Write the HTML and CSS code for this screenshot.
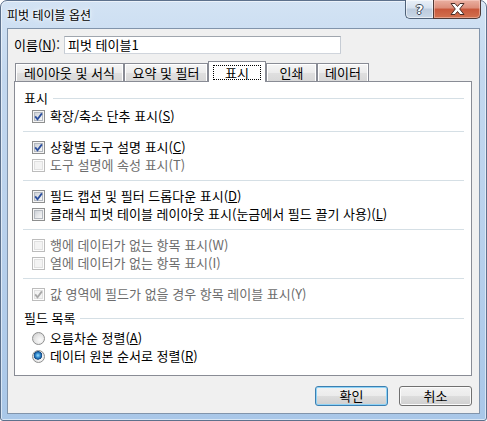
FILE: index.html
```html
<!DOCTYPE html>
<html lang="ko">
<head>
<meta charset="utf-8">
<title>피벗 테이블 옵션</title>
<link rel="stylesheet" href="styles.css">
</head>
<body>
<div class="window">
  <div class="titlebar">
    <span class="title">피벗 테이블 옵션</span>
    <div class="caption">
      <div class="cap-btn help">?</div>
      <div class="cap-btn close">
        <svg width="15" height="12" viewBox="0 0 15 12"><path d="M1 .5h4l2.5 3 2.5-3h4l-4.3 5.5 4.3 5.5h-4l-2.5-3-2.5 3h-4l4.3-5.5z" fill="#fff" stroke="#4a2f28" stroke-width="1"/></svg>
      </div>
    </div>
  </div>
  <div class="client">
    <div class="name-row">
      <span class="name-label">이름(<u>N</u>):</span>
      <div class="textbox">피벗 테이블1</div>
    </div>
    <div class="tabs">
      <div class="tab w1">레이아웃 및 서식</div>
      <div class="tab w2">요약 및 필터</div>
      <div class="tab sel"><span class="focus">표시</span></div>
      <div class="tab w4">인쇄</div>
      <div class="tab w5">데이터</div>
    </div>
    <div class="panel">
      <div class="gh"><span>표시</span><i class="rule"></i></div>
      <div class="opt"><span class="chk on"><svg viewBox="0 0 13 13"><path d="M3.2 6.4l2.3 2.9L9.9 3.4"/></svg></span><span>확장/축소 단추 표시(<u>S</u>)</span></div>
      <div class="sep"></div>
      <div class="opt"><span class="chk on"><svg viewBox="0 0 13 13"><path d="M3.2 6.4l2.3 2.9L9.9 3.4"/></svg></span><span>상황별 도구 설명 표시(<u>C</u>)</span></div>
      <div class="opt dis"><span class="chk"></span><span>도구 설명에 속성 표시(T)</span></div>
      <div class="sep"></div>
      <div class="opt"><span class="chk on"><svg viewBox="0 0 13 13"><path d="M3.2 6.4l2.3 2.9L9.9 3.4"/></svg></span><span>필드 캡션 및 필터 드롭다운 표시(<u>D</u>)</span></div>
      <div class="opt"><span class="chk"></span><span>클래식 피벗 테이블 레이아웃 표시(눈금에서 필드 끌기 사용)(<u>L</u>)</span></div>
      <div class="sep"></div>
      <div class="opt dis"><span class="chk"></span><span>행에 데이터가 없는 항목 표시(W)</span></div>
      <div class="opt dis"><span class="chk"></span><span>열에 데이터가 없는 항목 표시(I)</span></div>
      <div class="sep"></div>
      <div class="opt dis"><span class="chk on"><svg viewBox="0 0 13 13"><path d="M3.2 6.4l2.3 2.9L9.9 3.4"/></svg></span><span>값 영역에 필드가 없을 경우 항목 레이블 표시(Y)</span></div>
      <div class="gh gh2"><span>필드 목록</span><i class="rule"></i></div>
      <div class="opt first-radio"><span class="rad"></span><span>오름차순 정렬(<u>A</u>)</span></div>
      <div class="opt"><span class="rad on"></span><span>데이터 원본 순서로 정렬(<u>R</u>)</span></div>
    </div>
    <div class="buttons">
      <div class="btn default">확인</div>
      <div class="btn">취소</div>
    </div>
  </div>
</div>
</body>
</html>
```
FILE: styles.css
```css
html, body {
  margin: 0;
  padding: 0;
  width: 487px;
  height: 421px;
  overflow: hidden;
  background: #ffffff;
}

.window {
  box-sizing: border-box;
  width: 487px;
  height: 421px;
  border: 1px solid #5d718c;
  border-radius: 7px 7px 3px 3px;
  padding: 0 6px 6px 6px;
  display: flex;
  flex-direction: column;
  background: linear-gradient(180deg, #d3e3f4 0%, #c3d8ef 18%, #b9d1ec 55%, #a9c7e8 100%);
  box-shadow: inset 0 0 0 1px rgba(255, 255, 255, 0.55);
  font-family: "Noto Sans CJK KR", "Noto Sans", sans-serif;
  font-size: 12px;
  color: #000;
}

/* ---------- title bar ---------- */
.titlebar {
  height: 27px;
  display: flex;
  align-items: flex-start;
  flex: none;
}

.title {
  padding-top: 5px;
  line-height: 18px;
  color: #000;
  text-shadow: 0 0 6px #ffffff, 0 0 3px #ffffff;
}

.caption {
  margin-left: auto;
  margin-top: -1px;
  margin-right: -1px;
  display: flex;
}

.cap-btn {
  box-sizing: border-box;
  height: 19px;
  display: flex;
  align-items: center;
  justify-content: center;
}

.help {
  width: 28px;
  border: 1px solid #4f6178;
  border-top: none;
  border-right: none;
  border-radius: 0 0 0 5px;
  background: linear-gradient(180deg, #e9f0f8 0%, #d6e1ee 45%, #bccbdd 50%, #c9d7e7 100%);
  box-shadow: inset 0 0 0 1px rgba(255, 255, 255, 0.55);
  font-family: "DejaVu Sans", sans-serif;
  font-weight: bold;
  font-size: 13px;
  line-height: 13px;
  color: #fff;
  text-shadow: 1px 0 0 #3b4656, -1px 0 0 #3b4656, 0 1px 0 #3b4656, 0 -1px 0 #3b4656;
}

.close {
  width: 48px;
  border: 1px solid #4f3a37;
  border-top: none;
  border-radius: 0 0 5px 0;
  background: linear-gradient(180deg, #eab0a2 0%, #dc8d79 45%, #c8573b 50%, #d2714f 100%);
  box-shadow: inset 0 0 0 1px rgba(255, 220, 210, 0.45);
}

/* ---------- client area ---------- */
.client {
  flex: 1;
  border: 1px solid #8194ab;
  background: #f0f0f0;
  padding: 7px 7px 0 6px;
  display: flex;
  flex-direction: column;
  font-size: 13px;
}

.name-row {
  display: flex;
  align-items: center;
  height: 18px;
}

.name-label {
  width: 50px;
  flex: none;
  line-height: 18px;
}

.textbox {
  box-sizing: border-box;
  width: 277px;
  height: 18px;
  border: 1px solid #a6abb3;
  border-color: #a0a6ae #c6ccd4 #d0d5dc #c6ccd4;
  background: #fff;
  padding-left: 3px;
  line-height: 16px;
}

/* ---------- tabs ---------- */
.tabs {
  display: flex;
  align-items: flex-end;
  margin-top: 7px;
  padding-left: 1px;
  position: relative;
  z-index: 1;
}

.tab {
  box-sizing: border-box;
  height: 18px;
  border: 1px solid #898c95;
  border-bottom: none;
  background: linear-gradient(180deg, #f6f6f6 0%, #ececec 50%, #e0e0e0 51%, #d8d8d8 100%);
  box-shadow: inset 1px 1px 0 #ffffff, inset -1px 0 0 #ffffff;
  text-align: center;
  line-height: 17px;
  white-space: nowrap;
}

.w1 { width: 109px; }
.w2 { width: 84px; }
.w4 { width: 51px; }
.w5 { width: 52px; }

.tab.sel {
  width: 58px;
  height: 21px;
  margin-bottom: -1px;
  background: #ffffff;
  box-shadow: none;
  padding-top: 3px;
  display: flex;
  justify-content: center;
  align-items: flex-start;
}

.focus {
  box-sizing: border-box;
  width: 48px;
  height: 15px;
  border: 1px dotted #000;
  line-height: 13px;
  text-align: center;
}

/* ---------- panel ---------- */
.panel {
  box-sizing: border-box;
  height: 295px;
  border: 1px solid #898c95;
  background: #ffffff;
  padding-top: 7px;
}

.gh {
  display: flex;
  align-items: center;
  height: 18px;
  padding-left: 9px;
  margin-right: 7px;
  line-height: 18px;
}

.gh2 { margin-top: 6px; }

.rule {
  flex: 1;
  height: 1px;
  background: #d5dfe5;
  margin-left: 5px;
}

.sep {
  height: 1px;
  background: #d5dfe5;
  margin: 6px 7px 6px 8px;
}

.opt {
  display: flex;
  align-items: center;
  height: 18px;
  line-height: 18px;
  padding-left: 17px;
  white-space: nowrap;
}

.first-radio { margin-top: 2px; }

.opt.dis { color: #6d6d6d; }

.chk {
  box-sizing: border-box;
  flex: none;
  width: 13px;
  height: 13px;
  margin-right: 5px;
  border: 1px solid #8e8f8f;
  background: #f4f4f4;
  position: relative;
  display: flex;
}

.chk::before {
  content: "";
  position: absolute;
  left: 1px;
  top: 1px;
  right: 1px;
  bottom: 1px;
  border: 1px solid #b3b8bf;
  background: linear-gradient(135deg, #cdd1d7 0%, #e4e6e9 50%, #f8f8f8 100%);
}

.chk svg {
  position: absolute;
  left: -1px;
  top: -1px;
  width: 13px;
  height: 13px;
  z-index: 1;
}

.chk svg path {
  fill: none;
  stroke: #2c4f9e;
  stroke-width: 1.8;
}

.dis .chk {
  border-color: #bcbcbc;
  background: #fdfdfd;
}

.dis .chk::before {
  border-color: #e0e0e0;
  background: #f3f3f3;
}

.dis .chk svg path {
  stroke: #a8a8a8;
}

.rad {
  box-sizing: border-box;
  flex: none;
  width: 13px;
  height: 13px;
  margin-right: 5px;
  border-radius: 50%;
  border: 1px solid #8e8f8f;
  background: radial-gradient(circle at 65% 65%, #fbfbfb 0%, #e8e8e8 45%, #c8c8c8 100%);
}

.rad.on {
  background:
    radial-gradient(circle at 45% 40%, #9ae0ff 0px, #3d95d6 2px, #1a5a9c 3.5px, #134a82 4px, rgba(0,0,0,0) 4.5px),
    radial-gradient(circle at 65% 65%, #fbfbfb 0%, #e8e8e8 45%, #c8c8c8 100%);
}

/* ---------- buttons ---------- */
.buttons {
  display: flex;
  justify-content: flex-end;
  gap: 11px;
  margin-top: 10px;
}

.btn {
  box-sizing: border-box;
  width: 73px;
  height: 20px;
  border: 1px solid #707070;
  border-radius: 3px;
  background: linear-gradient(180deg, #f2f2f2 0%, #ebebeb 50%, #dddddd 51%, #cfcfcf 100%);
  box-shadow: inset 0 0 0 1px #fbfbfb;
  display: flex;
  align-items: center;
  justify-content: center;
  line-height: 18px;
}

.btn.default {
  border-color: #3c7fb1;
  box-shadow: inset 0 0 0 1px #8fd3f6;
}
```
